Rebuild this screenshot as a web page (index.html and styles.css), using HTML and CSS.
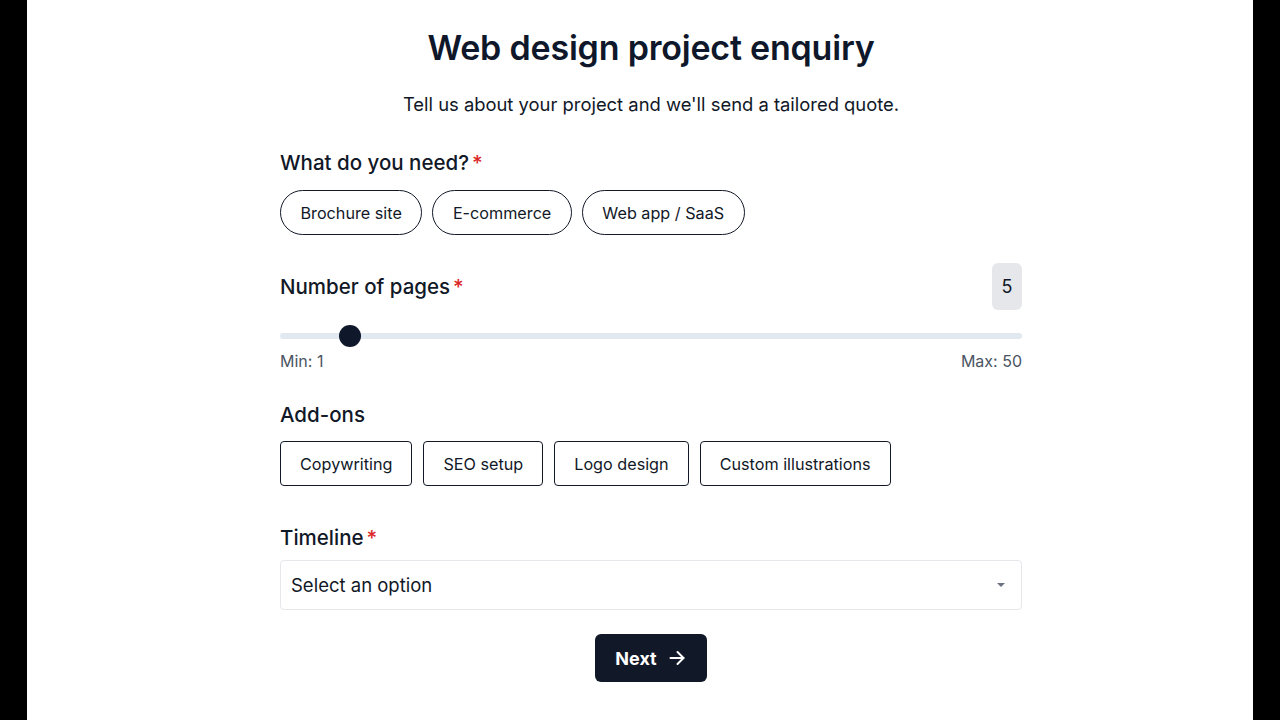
FILE: index.html
```html
<!DOCTYPE html>
<html lang="en">
<head>
    <meta charset="UTF-8">
    <meta name="viewport" content="width=device-width, initial-scale=1.0">
    <title>Web design project enquiry</title>
    <link rel="stylesheet" href="styles.css">
</head>
<body>

<div class="page">
  <form class="enquiry">
    <h1 class="enquiry__title">Web design project enquiry</h1>
    <p class="enquiry__intro">Tell us about your project and we'll send a tailored quote.</p>

    <div class="field">
      <div class="field__label">What do you need?<span class="req">*</span></div>
      <div class="options">
        <button type="button" class="pill">Brochure site</button>
        <button type="button" class="pill">E-commerce</button>
        <button type="button" class="pill">Web app / SaaS</button>
      </div>
    </div>

    <div class="field field--range">
      <div class="range-head">
        <div class="field__label">Number of pages<span class="req">*</span></div>
        <output class="range-value">5</output>
      </div>
      <input class="range" type="range" min="1" max="50" value="5">
      <div class="range-limits">
        <span>Min: 1</span>
        <span>Max: 50</span>
      </div>
    </div>

    <div class="field field--addons">
      <div class="field__label">Add-ons</div>
      <div class="options options--boxes">
        <button type="button" class="box">Copywriting</button>
        <button type="button" class="box">SEO setup</button>
        <button type="button" class="box">Logo design</button>
        <button type="button" class="box">Custom illustrations</button>
      </div>
    </div>

    <div class="field field--timeline">
      <div class="field__label">Timeline<span class="req">*</span></div>
      <div class="select">
        <span>Select an option</span>
        <span class="select__caret"></span>
      </div>
    </div>

    <div class="actions">
      <button type="button" class="next">
        Next
        <svg width="20" height="20" viewBox="0 0 20 20" fill="none" stroke="currentColor" stroke-width="2" stroke-linecap="round" stroke-linejoin="round">
          <path d="M3.5 10h13"/>
          <path d="M10.5 4l6 6-6 6"/>
        </svg>
      </button>
    </div>
  </form>
</div>

</body>
</html>
```

FILE: styles.css
```css
*,
*::before,
*::after {
  box-sizing: border-box;
}

html {
  background: #000;
}

body {
  margin: 0;
  font-family: Inter, "Noto Sans", sans-serif;
  color: #111827;
  background: #000;
}

.page {
  margin: 0 27px;
  min-height: 720px;
  background: #fff;
  padding-top: 26px;
}

.enquiry {
  width: 742px;
  margin: 0 auto;
  position: relative;
  left: 11px;
}

.enquiry__title {
  margin: 0;
  text-align: center;
  font-size: 34px;
  font-weight: 600;
  line-height: 44px;
  letter-spacing: -0.2px;
  color: #0f172a;
}

.enquiry__intro {
  margin: 21px 0 0;
  text-align: center;
  font-size: 18.4px;
  line-height: 26px;
  color: #111827;
}

.field {
  margin-top: 32px;
}

.field__label {
  font-size: 20.5px;
  font-weight: 500;
  line-height: 28px;
  color: #111827;
}

.req {
  color: #dc2626;
  margin-left: 3px;
}

.options {
  display: flex;
  gap: 10px;
  margin-top: 13px;
}

.pill,
.box {
  font-family: inherit;
  font-size: 16.2px;
  color: #111827;
  background: #fff;
  border: 1px solid #111827;
  height: 45px;
  cursor: pointer;
}

.pill {
  border-radius: 999px;
  padding: 0 19.5px;
}

.field--addons {
  margin-top: 29px;
}

.options--boxes {
  gap: 11px;
  margin-top: 12px;
}

.box {
  border-radius: 4px;
  padding: 0 19px;
}

.field--range {
  margin-top: 28px;
}

.range-head {
  display: flex;
  justify-content: space-between;
  align-items: center;
}

.range-value {
  width: 30px;
  height: 47px;
  border-radius: 6px;
  background: #e5e7eb;
  display: flex;
  align-items: center;
  justify-content: center;
  font-size: 18px;
  color: #111827;
}

.range {
  -webkit-appearance: none;
  appearance: none;
  display: block;
  width: 100%;
  height: 22px;
  margin: 15px 0 0;
  background: transparent;
}

.range::-webkit-slider-runnable-track {
  height: 6px;
  border-radius: 3px;
  background: #e2e8f0;
}

.range::-webkit-slider-thumb {
  -webkit-appearance: none;
  width: 22px;
  height: 22px;
  margin-top: -8px;
  border-radius: 50%;
  background: #0f172a;
}

.range-limits {
  display: flex;
  justify-content: space-between;
  margin-top: 3px;
  font-size: 16px;
  line-height: 22px;
  color: #4b5563;
}

.field--timeline {
  margin-top: 38px;
}

.select {
  margin-top: 8px;
  height: 50px;
  border: 1px solid #e5e7eb;
  border-radius: 4px;
  padding: 0 14px 0 10px;
  display: flex;
  align-items: center;
  justify-content: space-between;
  font-size: 18.5px;
  color: #111827;
}

.select__caret {
  width: 0;
  height: 0;
  border-left: 4px solid transparent;
  border-right: 4px solid transparent;
  border-top: 4px solid #6b7280;
  margin-right: 2px;
}

.actions {
  display: flex;
  justify-content: center;
  margin-top: 24px;
}

.next {
  display: flex;
  align-items: center;
  gap: 10px;
  height: 48px;
  padding: 0 20px;
  border: none;
  border-radius: 6px;
  background: #111827;
  color: #fff;
  font-family: inherit;
  font-size: 18px;
  font-weight: 700;
  cursor: pointer;
}
```
